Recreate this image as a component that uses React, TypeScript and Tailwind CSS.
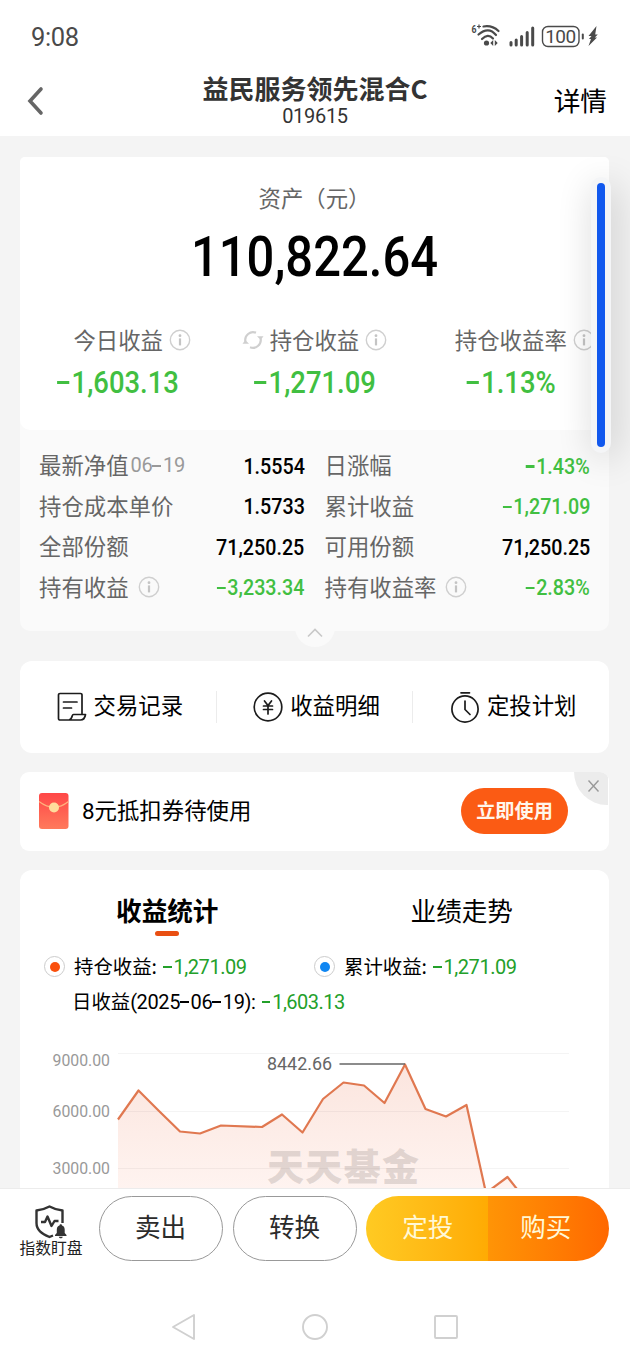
import React from "react";

const CJK = "font-['Noto_Sans_CJK_SC',sans-serif]";
const NUM = "font-[Roboto,'Noto_Sans_CJK_SC',sans-serif]";

const holdings = [
  { label: "最新净值", date: "06-19", value: "1.5554" },
  { label: "日涨幅", value: "-1.43%" },
  { label: "持仓成本单价", value: "1.5733" },
  { label: "累计收益", value: "-1,271.09" },
  { label: "全部份额", value: "71,250.25" },
  { label: "可用份额", value: "71,250.25" },
  { label: "持有收益", info: true, value: "-3,233.34" },
  { label: "持有收益率", info: true, value: "-2.83%" },
];

// the minus sign in the number font is wider than a plain hyphen
function Amount({ children }: { children: string }) {
  const negative = children.startsWith("-");
  return (
    <>
      {negative && (
        <span className="inline-block w-[0.44em] h-[0.1em] mr-[0.09em] align-[0.28em] bg-current" />
      )}
      {negative ? children.slice(1) : children}
    </>
  );
}

function InfoIcon({ className = "" }: { className?: string }) {
  return (
    <svg viewBox="0 0 22 22" className={`w-[22px] h-[22px] shrink-0 ${className}`} fill="none">
      <circle cx="11" cy="11" r="9.7" stroke="#cfcfcf" strokeWidth="1.4" />
      <circle cx="11" cy="6.7" r="1.4" fill="#c4c4c4" />
      <path d="M11 9.4v7" stroke="#c4c4c4" strokeWidth="2.2" />
    </svg>
  );
}

function RefreshIcon({ className = "" }: { className?: string }) {
  return (
    <svg viewBox="0 0 22 20" className={`w-[22px] h-5 shrink-0 ${className}`} fill="none">
      <path d="M3.4 11.500A7.8 7.8 0 0 1 14 2.800M18.6 8.500A7.8 7.8 0 0 1 8 17.200" stroke="#cfcfcf" strokeWidth="2.2" />
      <path d="M15 6.2h6.500l-2.800 3.800zM7 13.8H.5l2.800-3.800z" fill="#cfcfcf" />
    </svg>
  );
}

function StatusBar() {
  return (
    <div className="flex h-[72px] items-center justify-between pl-[31px] pr-[31px] text-[#4a4a4a]">
      <span className={`${NUM} text-[25.5px] tracking-[-0.4px] leading-none pt-[3px]`}>9:08</span>
      <svg viewBox="0 0 128 26" className="w-32 h-[26px]" fill="none">
        <text x="0.500" y="9.500" fontSize="11" fontWeight="700" textLength="5" lengthAdjust="spacingAndGlyphs" fontFamily="Roboto" fill="#4a4a4a">6</text>
        <path d="M6 3.500h4M8 1.500v4" stroke="#4a4a4a" strokeWidth="1.2" />
        <path d="M12.500 3.500Q21 2 27.500 8" stroke="#4a4a4a" strokeWidth="2.2" strokeLinecap="round" />
        <path d="M7.500 11.500Q17.500 3 25 12" stroke="#4a4a4a" strokeWidth="2.2" strokeLinecap="round" />
        <path d="M11 16Q17 10 22 15.500" stroke="#4a4a4a" strokeWidth="2.2" strokeLinecap="round" />
        <circle cx="15.500" cy="20" r="2.600" fill="#4a4a4a" />
        <path d="M22.200 17v6l-2.900-3zM23.800 17v6l2.900-3z" fill="#4a4a4a" />
        <path d="M40 22v-2.500M45.200 22v-5M50.600 22v-8.500M56.200 22V9.500M61.700 22V5" stroke="#4a4a4a" strokeWidth="3" strokeLinecap="round" />
        <rect x="71.500" y="3.500" width="36.500" height="20" rx="5.500" stroke="#4a4a4a" strokeWidth="1.4" />
        <path d="M111.800 11.500v4" stroke="#4a4a4a" strokeWidth="2" strokeLinecap="round" />
        <text x="89.700" y="20.200" textAnchor="middle" fontSize="19" textLength="31" fontFamily="Roboto" fill="#4a4a4a">100</text>
        <path d="M125.500 3l-8 10h3l-2.500 3h2l-2.500 7 8.500-8.500h-2.200l3-3h-2.600z" fill="#4a4a4a" />
      </svg>
    </div>
  );
}

function Header() {
  return (
    <header className="h-[136px] bg-white">
      <StatusBar />
      <div className="grid grid-cols-[1fr_auto_1fr] items-start h-16">
        <svg viewBox="0 0 18 30" className="w-[18px] h-[30px] ml-[26px] mt-[14px]" fill="none">
          <path d="M15 3L4 15l11 12" stroke="#666" strokeWidth="3.6" strokeLinecap="round" />
        </svg>
        <div className="text-center text-[#333]">
          <h1 className={`${CJK} text-[26px] leading-8 font-bold`}>益民服务领先混合C</h1>
          <p className={`${NUM} mt-[2px] text-[20px] leading-5 tracking-[-0.3px]`}>019615</p>
        </div>
        <span className={`${CJK} justify-self-end mr-[23px] mt-[10px] text-[26.7px] leading-9`}>详情</span>
      </div>
    </header>
  );
}

function SummaryItem({ label, value, refresh }: { label: string; value: string; refresh?: boolean }) {
  return (
    <div className="flex flex-col items-center">
      <div className="flex items-center h-[30px] text-[22.4px] text-[#666]">
        {refresh && <RefreshIcon className="-ml-[28px] mr-[6px]" />}
        <span className="-mt-px">{label}</span>
        <InfoIcon className="ml-[6px] -mr-[28px]" />
      </div>
      <p className={`${NUM} mt-[12px] h-8 leading-8 text-[31.5px] scale-x-[0.87] font-medium text-[#41bf41]`}>
        <Amount>{value}</Amount>
      </p>
    </div>
  );
}

function AssetCard() {
  return (
    <section className="relative rounded-[5px] rounded-b-[10px] bg-[#fafafa]">
      <div className="h-[273px] rounded-[5px] rounded-b-[10px] bg-white pt-[25px] text-center">
        <p className="text-[22.4px] leading-[30px] text-[#666]">资产（元）</p>
        <p className={`${NUM} mt-[15px] text-[55px] leading-[60px] font-medium scale-x-[0.89] text-black`}>
          110,822.64
        </p>
        <div className="mt-[38px] grid grid-cols-3">
          <SummaryItem label="今日收益" value="-1,603.13" />
          <SummaryItem label="持仓收益" value="-1,271.09" refresh />
          <SummaryItem label="持仓收益率" value="-1.13%" />
        </div>
      </div>
      <div className="h-[201px] px-[19px] pt-[15px] grid grid-cols-2 gap-x-5 auto-rows-[40.5px]">
        {holdings.map((row) => (
          <div key={row.label} className="flex items-center">
            <span className="text-[22.4px] text-[#666]">{row.label}</span>
            {row.date && (
              <span className={`${NUM} ml-[2px] text-[20px] text-[#999] tracking-[-0.3px]`}>
                06<Amount>-19</Amount>
              </span>
            )}
            {row.info && <InfoIcon className="ml-[9px] mt-px" />}
            <span
              className={`${NUM} ml-auto pt-[3px] text-[22.4px] origin-right scale-x-[0.88] font-medium ${
                row.value.startsWith("-") ? "text-[#41bf41]" : "text-black"
              }`}
            >
              <Amount>{row.value}</Amount>
            </span>
          </div>
        ))}
      </div>
      <div className="absolute left-1/2 bottom-[-16px] h-10 w-10 -translate-x-1/2 rounded-full bg-[#fafafa]">
        <svg viewBox="0 0 40 40" fill="none">
          <path d="M13 29.500l7-7 7 7" stroke="#c8c8c8" strokeWidth="1.6" />
        </svg>
      </div>
    </section>
  );
}

function RecordIcon() {
  return (
    <svg viewBox="0 0 30 30" className="w-[30px] h-[30px]" fill="none" stroke="#1c1c1c" strokeWidth="1.7" strokeLinejoin="round" strokeLinecap="round">
      <path d="M25 21.500V3a1.500 1.500 0 0 0-1.500-1.500H3A1.500 1.500 0 0 0 1.500 3v23.500A1.500 1.500 0 0 0 3 28h20.500c2.700 0 4.500-2.200 5-5.500H16.500c-.6 0-1 .4-1.200 1.200-.5 2-1.400 3.800-3.300 4.300" />
      <path d="M6.500 10h13.500M6.500 16h8" />
    </svg>
  );
}

function YuanIcon() {
  return (
    <svg viewBox="0 0 30 30" className="w-[30px] h-[30px]" fill="none" stroke="#1c1c1c" strokeWidth="1.7" strokeLinecap="round">
      <circle cx="15" cy="15" r="13.8" />
      <path d="M11.500 9l3.500 4.500L18.500 9M15 13.500V22M10.500 14h9M10.500 17.500h9" />
    </svg>
  );
}

function TimerIcon() {
  return (
    <svg viewBox="0 0 30 32" className="w-[30px] h-8" fill="none" stroke="#1c1c1c" strokeWidth="1.7" strokeLinecap="round">
      <circle cx="15" cy="18" r="13.1" />
      <path d="M11 1.800h8.500M15 10v8.500l5 5" />
    </svg>
  );
}

const shortcuts = [
  { label: "交易记录", icon: <RecordIcon /> },
  { label: "收益明细", icon: <YuanIcon /> },
  { label: "定投计划", icon: <TimerIcon /> },
];

function Shortcuts() {
  return (
    <section className="mt-[30px] flex h-[92px] items-center rounded-xl bg-white">
      {shortcuts.map((item, i) => (
        <div
          key={item.label}
          className={`flex h-8 flex-1 items-center justify-center gap-[7px] pl-1 pb-px text-[22.4px] text-black ${
            i < 2 ? "border-r border-[#ececec]" : ""
          }`}
        >
          {item.icon}
          <span className="-mt-[3px]">{item.label}</span>
        </div>
      ))}
    </section>
  );
}

function Coupon() {
  return (
    <section className="relative mt-[19px] flex h-[79px] items-center overflow-hidden rounded-[9px] bg-white pl-[19px] pr-[41px]">
      <svg viewBox="0 0 30 36" className="-mt-[2px] w-[30px] h-9" fill="none">
        <defs>
          <linearGradient id="envelope" x1="0" y1="0" x2="0" y2="1">
            <stop offset="0" stopColor="#ff4747" />
            <stop offset="1" stopColor="#ff7a5c" />
          </linearGradient>
        </defs>
        <rect width="29.500" height="36" rx="3" fill="url(#envelope)" />
        <path d="M0 8.500Q15 20 29.500 8.500" stroke="#ffb27d" strokeWidth="1.2" />
        <circle cx="15" cy="14.500" r="5" fill="#ffdc9c" />
      </svg>
      <span className="ml-[13px] -mt-[2px] text-[22.4px]">
        <span className={NUM}>8</span>元抵扣券待使用
      </span>
      <button className="ml-auto -mt-px h-[46px] w-[107px] rounded-full bg-[#fb5b14] pb-[2px] text-[19.2px] font-bold text-[#fff6ec]">
        立即使用
      </button>
      <div className="absolute right-px top-0 h-[33px] w-[34px] rounded-bl-[34px] bg-[#ececec]">
        <svg viewBox="0 0 34 33" fill="none">
          <path d="M14.500 8.500l10 11M24.500 8.500l-10 11" stroke="#999" strokeWidth="1.4" />
        </svg>
      </div>
    </section>
  );
}

function Legend({ label, dot }: { label: string; dot: string }) {
  return (
    <div className="flex w-[270px] items-center">
      <span className="flex h-[21px] w-[21px] items-center justify-center rounded-full border border-[#ccc]">
        <span className={`h-[10px] w-[10px] rounded-full ${dot}`} />
      </span>
      <span className="ml-[9px] -mt-[2px] text-[19.4px] text-black">{label}:</span>
      <span className={`${NUM} ml-[6px] text-[20px] tracking-[-0.45px] text-[#23a02a]`}>
        <Amount>-1,271.09</Amount>
      </span>
    </div>
  );
}

const points: [number, number][] = [
  [98, 79.5], [118.5, 50.5], [139, 71], [160, 91.5], [180, 93.5], [201, 85.5], [242, 87],
  [262, 74.5], [282.5, 92.5], [303, 59], [323.5, 42.5], [344, 45.5], [364.5, 63], [385, 24.5],
  [405.5, 69], [426, 76.5], [446.5, 65], [466, 153], [487.5, 137], [508, 163],
];

function ProfitChart() {
  const line = points.map(([x, y]) => `${x},${y}`).join(" ");
  return (
    <svg viewBox="0 0 589 148" className="block w-full h-[148px]" fill="none">
      <defs>
        <linearGradient id="area" x1="0" y1="0" x2="0" y2="1">
          <stop offset="0" stopColor="#fbe5de" />
          <stop offset="1" stopColor="#fff5f2" />
        </linearGradient>
      </defs>
      <polygon points={`98,163 ${line}`} fill="url(#area)" />
      <path d="M98 13.500h451M98 71.500h451M98 128.500h451" stroke="#000" strokeOpacity=".045" />
      <g className={NUM} fontSize="17" fill="#999" textAnchor="end">
        <text x="90" y="26" textLength="57.500" lengthAdjust="spacingAndGlyphs">9000.00</text>
        <text x="90" y="76.500" textLength="57.500" lengthAdjust="spacingAndGlyphs">6000.00</text>
        <text x="90" y="133.500" textLength="57.500" lengthAdjust="spacingAndGlyphs">3000.00</text>
      </g>
      <text x="247" y="141" fontSize="37" fontWeight="900" textLength="152" className={CJK} fill="#8b7f7b" fillOpacity=".25">
        天天基金
      </text>
      <polyline points={line} stroke="#e07850" strokeWidth="2.2" strokeLinejoin="round" />
      <path d="M319.500 24H385" stroke="#666" strokeWidth="1.5" />
      <text x="247" y="30" fontSize="19" textLength="65" lengthAdjust="spacingAndGlyphs" className={NUM} fill="#666">8442.66</text>
    </svg>
  );
}

function Stats() {
  return (
    <section className="mt-[19px] h-[318px] rounded-t-xl bg-white">
      <div className="grid grid-cols-2 pt-[21px] text-center text-[25.6px] leading-[38px] text-black">
        <div className="flex flex-col items-center font-bold">
          收益统计
          <span className="mt-[2px] h-[5px] w-6 rounded-full bg-[#e94f12]" />
        </div>
        <div>业绩走势</div>
      </div>
      <div className="mt-[13px] flex h-[35px] items-center pl-6">
        <Legend label="持仓收益" dot="bg-[#fa4f0c]" />
        <Legend label="累计收益" dot="bg-[#0f86f2]" />
      </div>
      <div className="flex h-[35px] items-center pl-[52px] text-[19.4px] text-black">
        <span className="-mt-[2px]">日收益</span>
        <span className={`${NUM} text-[20px] tracking-[-0.4px]`}>
          (2025<Amount>-06</Amount>
          <Amount>-19</Amount>):
        </span>
        <span className={`${NUM} ml-[6px] text-[20px] tracking-[-0.5px] text-[#23a02a]`}>
          <Amount>-1,603.13</Amount>
        </span>
      </div>
      <div className="mt-[21px]">
        <ProfitChart />
      </div>
    </section>
  );
}

function ActionBar() {
  return (
    <footer className="flex h-[98px] items-start border-t border-[#ececec] bg-white pl-[19px] pr-[21px] pt-[7px]">
      <div className="flex w-16 flex-col items-center pt-[9px]">
        <svg viewBox="0 0 34 34" className="w-[34px] h-[34px]" fill="none">
          <path d="M28.500 18V5.500Q22 5 15.500 1.500 9 5 2.500 5.500V18c0 7 5 10.500 13 14l3.500-1.500" stroke="#333" strokeWidth="2.400" strokeLinejoin="round" />
          <path d="M7 17h4l2.500-5.500 4 9.500 3-5h4" stroke="#333" strokeWidth="2.400" strokeLinejoin="round" />
          <path d="M21 31v-1l1.800-2v-3.500c0-2.500 1.200-3.500 2.700-4 0-1.700 2.500-1.700 2.500 0 1.500.5 2.700 1.500 2.700 4V28l1.800 2v1zM24.800 31.800h4c-.6 2-3.400 2-4 0z" fill="#333" />
        </svg>
        <span className="text-[15.8px] leading-4 text-[#222] mt-px whitespace-nowrap">指数盯盘</span>
      </div>
      <div className="ml-[15.500px] flex gap-[10px] text-[25.6px] text-[#2b2b2b]">
        <button className="h-[65px] w-[124px] rounded-full border border-[#999] pb-[4px]">卖出</button>
        <button className="h-[65px] w-[124px] rounded-full border border-[#999] pb-[4px]">转换</button>
      </div>
      <div className="ml-auto flex h-[65px] w-[243px] overflow-hidden rounded-full text-[25.6px] text-[#fff8d6]">
        <button className="w-1/2 bg-linear-to-r from-[#ffca22] to-[#ffab03] pb-[5px] pl-[2px]">定投</button>
        <button className="w-1/2 bg-linear-to-r from-[#ff9406] to-[#ff6800] pb-[5px] pr-[5px]">购买</button>
      </div>
    </footer>
  );
}

function SystemNav() {
  return (
    <nav className="flex h-[74px] items-center justify-between bg-white pt-[8px] pl-[170px] pr-[170px]">
      <svg viewBox="0 0 28 28" className="w-7 h-7" fill="none" stroke="#d0d0d0" strokeWidth="1.9" strokeLinejoin="round">
        <path d="M24 2v24L3 14z" />
      </svg>
      <svg viewBox="0 0 28 28" className="w-7 h-7" fill="none" stroke="#d0d0d0" strokeWidth="1.9">
        <circle cx="14" cy="14" r="12" />
      </svg>
      <svg viewBox="0 0 28 28" className="w-7 h-7" fill="none" stroke="#d0d0d0" strokeWidth="1.9">
        <rect x="3" y="3" width="22" height="22" rx="1" />
      </svg>
    </nav>
  );
}

export default function App() {
  return (
    <div className={`${CJK} relative h-[1360px] w-[630px] overflow-hidden bg-white`}>
      <Header />
      <main className="h-[1052px] overflow-hidden bg-[#f4f4f4] pl-5 pr-[21px] pt-[21px]">
        <AssetCard />
        <Shortcuts />
        <Coupon />
        <Stats />
      </main>
      <ActionBar />
      <SystemNav />

      {/* floating side handle */}
      <div className="absolute left-[591px] top-[177px] h-[276px] w-5 rounded-full bg-[#f4f5f7] p-[6px] shadow-[4px_6px_36px_rgba(0,0,0,0.2)]">
        <div className="h-full w-2 rounded-full bg-[#1158ee]" />
      </div>
    </div>
  );
}
